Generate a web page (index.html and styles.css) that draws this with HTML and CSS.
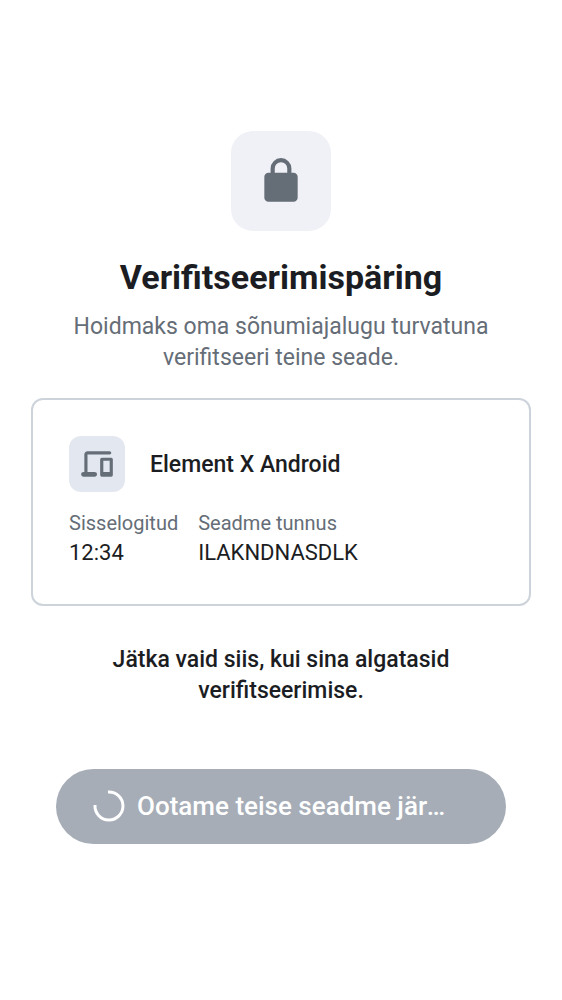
FILE: index.html
```html
<!DOCTYPE html>
<html lang="et">
<head>
<meta charset="utf-8">
<meta name="viewport" content="width=device-width, initial-scale=1">
<title>Verifitseerimispäring</title>
<link rel="stylesheet" href="styles.css">
</head>
<body>
<main class="screen">
  <header class="intro">
    <div class="hero-icon">
      <svg class="lock" viewBox="0 0 24 24" aria-hidden="true"><path fill-rule="evenodd" d="M6 22q-.825 0-1.412-.587A1.93 1.93 0 0 1 4 20V10q0-.825.588-1.412A1.93 1.93 0 0 1 6 8h1V6q0-2.075 1.463-3.537Q9.926 1 12 1t3.537 1.463T17 6v2h1q.824 0 1.413.588Q20 9.175 20 10v10q0 .824-.587 1.413A1.93 1.93 0 0 1 18 22zM9 8h6V6q0-1.250-.875-2.125A2.900 2.900 0 0 0 12 3q-1.250 0-2.125.875A2.900 2.900 0 0 0 9 6z"/></svg>
    </div>
    <h1 class="title">Verifitseerimispäring</h1>
    <p class="subtitle">Hoidmaks oma sõnumiajalugu turvatuna verifitseeri teine seade.</p>
  </header>
  <section class="card">
    <div class="device">
      <div class="device-icon">
        <svg class="devices" viewBox="0 0 24 24" aria-hidden="true"><path fill-rule="evenodd" d="M3.500 20q-.625 0-1.062-.437A1.450 1.450 0 0 1 2 18.500q0-.625.438-1.062A1.450 1.450 0 0 1 3.500 17H4V6q0-.824.588-1.412A1.930 1.930 0 0 1 6 4h14q.424 0 .712.287Q21 4.576 21 5t-.288.713A.970.970 0 0 1 20 6H6v11h4.500q.625 0 1.063.438.437.437.437 1.062t-.437 1.063A1.450 1.450 0 0 1 10.500 20zM15 20a1 1 0 0 1-1-1V9a1 1 0 0 1 1-1h6a1 1 0 0 1 1 1v10a1 1 0 0 1-1 1zm1-3h4v-7h-4z"/></svg>
      </div>
      <h2 class="device-name">Element X Android</h2>
    </div>
    <dl class="details">
      <div><dt>Sisselogitud</dt><dd>12:34</dd></div>
      <div><dt>Seadme tunnus</dt><dd>ILAKNDNASDLK</dd></div>
    </dl>
  </section>
  <p class="notice">Jätka vaid siis, kui sina algatasid verifitseerimise.</p>
  <button class="wait-button" type="button" disabled>
    <svg class="spinner" viewBox="0 0 32 32" aria-hidden="true"><path d="M15 2A14 14 0 1 1 2 15"/></svg>
    <span class="wait-label">Ootame teise seadme järgi…</span>
  </button>
</main>
</body>
</html>
```
FILE: styles.css
```css
* { box-sizing: border-box; }
body { margin: 0; background: #fff; color: #1b1d22; font-family: Roboto, sans-serif; }
h1, h2, p, dl, dd { margin: 0; }
.screen { display: flex; flex-direction: column; padding: 131px 31px 40px; }
.intro { display: flex; flex-direction: column; align-items: center; text-align: center; }
.hero-icon { display: grid; place-items: center; width: 100px; height: 100px; border-radius: 22px; background: #f0f1f6; }
.lock { width: 50px; height: 50px; fill: #656d77; }
.title { margin-top: 25px; font-size: 34px; line-height: 42px; font-weight: 700; }
.subtitle { max-width: 450px; margin-top: 13px; color: #656d77; font-size: 23px; line-height: 31px; }
.card { margin-top: 25px; padding: 36px; border: 2px solid #cdd3da; border-radius: 12px; }
.device { display: flex; align-items: center; gap: 25px; }
.device-icon { display: grid; place-items: center; width: 56px; height: 56px; border-radius: 12px; background: #e3e8f0; }
.devices { width: 38px; height: 38px; fill: #656d77; }
.device-name { font-size: 23px; line-height: 31px; font-weight: 500; }
.details { display: flex; gap: 20px; margin-top: 18px; }
dt { color: #656d77; font-size: 20px; line-height: 27px; }
dd { font-size: 22px; line-height: 31px; }
.notice { max-width: 400px; margin: 38px auto 0; text-align: center; font-size: 23px; line-height: 31px; font-weight: 500; }
.wait-button { display: flex; align-items: center; gap: 12px; margin: 63px 25px 0; padding: 18px 55px 19px 37px; border: 0; border-radius: 38px; background: #a6adb7; color: #fff; font: 500 26px/38px Roboto, sans-serif; }
.spinner { flex: none; width: 32px; height: 32px; fill: none; stroke: #fff; stroke-width: 3; }
.wait-label { min-width: 0; overflow: hidden; text-overflow: ellipsis; white-space: nowrap; }
```
